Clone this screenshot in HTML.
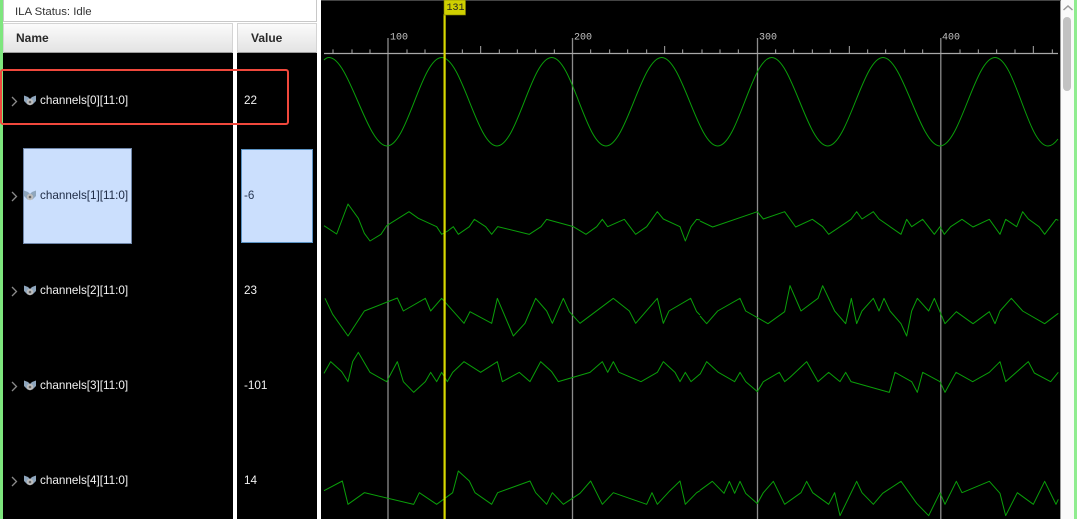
<!DOCTYPE html>
<html><head><meta charset="utf-8"><style>
html,body{margin:0;padding:0;background:#fff}
#p{position:relative;width:1081px;height:519px;overflow:hidden;background:#fff;font-family:"Liberation Sans",Arial,sans-serif}
#p div{position:absolute;box-sizing:border-box}
.t{font-size:11.7px;line-height:14px;white-space:nowrap;color:#f2f2f2}
.h{font-size:12px;font-weight:bold;color:#2a2a2a;line-height:14px;white-space:nowrap;top:31px}
.hd{top:23px;height:31px;background:linear-gradient(#fbfbfb,#e3e3e3);border:1px solid #d4d4d4;border-bottom:2px solid #9c9c9c}
</style></head><body><div id="p">
<div style="left:0;top:0;width:3px;height:519px;background:#7ee67e"></div>
<div style="left:3px;top:0;width:314px;height:22px;background:#fff;border:1px solid #c8c8c8;border-top:0"></div>
<div class="t" style="left:15px;top:5px;color:#333;font-size:11.4px">ILA Status: Idle</div>
<div class="hd" style="left:3px;width:230px"></div>
<div class="hd" style="left:237px;width:80px"></div>
<div class="h" style="left:16px">Name</div>
<div class="h" style="left:251px">Value</div>
<div style="left:3px;top:53px;width:230px;height:466px;background:#000"></div>
<div style="left:237px;top:53px;width:80px;height:466px;background:#000"></div>
<div style="left:23px;top:148px;width:109px;height:96px;background:#cbdffd;border:1px solid #6f86a8"></div>
<div style="left:241px;top:149px;width:72px;height:94px;background:#cbdffd;border:1px solid #5b93c4"></div>

<svg width="1081" height="519" style="position:absolute;left:0;top:0" xmlns="http://www.w3.org/2000/svg">
<defs>
<g id="ic"><path d="M0 0.5L4 2L6 4L8 2L12 0.5V6L8.500 9.500H3.500L0 6Z" fill="#8fa6bd"/><circle cx="6" cy="7" r="3.200" fill="#bdbdbd"/><circle cx="6" cy="7" r="1.300" fill="#666"/></g>
<path id="ch" d="M12 -4L16.500 0.500L12 5" fill="none" stroke="#8a8a8a" stroke-width="1.300"/>
</defs>
<use href="#ch" x="0" y="101"/><use href="#ic" x="24" y="95"/>
<use href="#ch" x="0" y="196"/><use href="#ic" x="24" y="190"/>
<use href="#ch" x="0" y="291"/><use href="#ic" x="24" y="285"/>
<use href="#ch" x="0" y="386"/><use href="#ic" x="24" y="380"/>
<use href="#ch" x="0" y="481"/><use href="#ic" x="24" y="475"/>
</svg>

<div class="t" style="left:40px;top:94px">channels[0][11:0]</div>
<div class="t" style="left:40px;top:189px;color:#1d2a44">channels[1][11:0]</div>
<div class="t" style="left:40px;top:284px">channels[2][11:0]</div>
<div class="t" style="left:40px;top:379px">channels[3][11:0]</div>
<div class="t" style="left:40px;top:474px">channels[4][11:0]</div>
<div class="t" style="left:244px;top:94px">22</div>
<div class="t" style="left:244px;top:189px;color:#2a3a55">-6</div>
<div class="t" style="left:244px;top:284px">23</div>
<div class="t" style="left:244px;top:379px">-101</div>
<div class="t" style="left:244px;top:474px">14</div>

<div style="left:321px;top:0;width:740px;height:519px;background:#000;border-top:1px solid #444;border-right:1px solid #999"></div>
<svg width="1081" height="519" style="position:absolute;left:0;top:0" xmlns="http://www.w3.org/2000/svg">
<g stroke="#8c8c8c" stroke-width="1.300" fill="none">
<path d="M388 38V519M572.500 38V519M757.500 38V519M940.800 38V519"/>
</g>
<path d="M324 53.500H1058" stroke="#a8a8a8" stroke-width="1.300"/>
<g transform="translate(320,0) scale(.33333)" stroke="#a8a8a8" stroke-width="3" fill="none">
<path d="M39 148V160M96 148V160M150 148V160M261 148V160M315 148V160M372 148V160M427 148V160M482 138V160M538 148V160M592 148V160M647 148V160M703 148V160M812 148V160M869 148V160M923 148V160M980 148V160M1034 138V160M1088 148V160"/>
</g>
<g transform="translate(700,0) scale(.33333)" stroke="#a8a8a8" stroke-width="3" fill="none">
<path d="M6 148V160M60 148V160M115 148V160M227 148V160M281 148V160M337 148V160M391 148V160M448 138V160M503 148V160M557 148V160M614 148V160M668 148V160M780 148V160M835 148V160M890 148V160M945 148V160M1000 138V160M1057 148V160"/>
</g>
<g font-family="'Liberation Mono',monospace" font-size="10" fill="#c4c4c4">
<text x="390" y="39.500">100</text><text x="574" y="39.500">200</text><text x="759" y="39.500">300</text><text x="942" y="39.500">400</text>
</g>
<g fill="none" stroke="#0a9f0a" stroke-width="1" stroke-linejoin="round">
<path d="M324 60C326 58 327 57.500 329 57.500C349 57.500 367 146 387 146C407 146 421.500 57.500 441.700 57.500C461.900 57.500 477 146 497 146C517 146 531.500 57.500 551.700 57.500C571.900 57.500 586 146 606 146C626 146 641.500 57.500 661.700 57.500C681.900 57.500 697.700 146 717.700 146C737.700 146 751.700 57.500 771.700 57.500C791.700 57.500 807.700 146 827.700 146C847.700 146 863 57.500 883 57.500C903 57.500 920 146 940 146C960 146 975 57.500 995 57.500C1015 57.500 1028 146 1048 146C1052 146 1055 143 1058 139"/>
</g>
<g transform="translate(320,190) scale(.33333)" fill="none" stroke="#0a9f0a" stroke-width="3" stroke-linejoin="round">
<polyline points="12,107 50,132 84,42 115,85 133,130 150,153 183,133 200,107 267,65 295,85 350,110 365,133 383,123 400,110 415,133 448,110 463,88 497,110 515,133 533,110 628,133 663,110 680,88 760,110 798,133 830,110 847,88 863,110 913,88 947,133 980,110 1012,65 1030,87 1080,110 1096,153 1113,110 1130,88 1140,90"/>
<polyline points="15,325 38,373 84,438 133,363 232,324 250,363 316,325 332,363 365,325 432,400 450,365 515,400 532,325 580,438 615,400 647,325 680,363 697,400 730,325 748,365 780,400 880,325 928,363 947,400 1012,325 1030,400 1047,363 1112,325 1130,365 1140,375"/>
</g>
<g transform="translate(700,190) scale(.33333)" fill="none" stroke="#0a9f0a" stroke-width="3" stroke-linejoin="round">
<polyline points="0,93 38,111 172,65 190,87 254,65 287,111 337,88 368,110 386,133 453,88 470,65 486,87 520,65 537,87 603,133 620,88 635,110 668,88 703,133 720,110 733,133 752,110 786,88 819,111 868,88 900,133 917,88 950,110 968,65 985,87 1017,110 1034,133 1068,88 1075,91"/>
<polyline points="0,378 20,401 53,363 120,325 137,363 204,401 254,365 270,287 303,363 354,325 368,287 404,363 437,401 454,325 470,401 486,363 520,325 537,363 552,325 570,363 603,401 620,438 635,363 652,325 686,363 703,325 735,401 769,365 819,401 868,365 885,401 900,363 934,325 968,363 1034,401 1075,370"/>
</g>
<g transform="translate(320,345) scale(.33333)" fill="none" stroke="#0a9f0a" stroke-width="3" stroke-linejoin="round">
<polyline points="12,85 32,50 65,80 84,110 98,50 115,22 150,82 200,110 232,50 250,110 281,142 316,110 332,82 350,110 365,82 382,110 398,82 432,50 482,82 532,50 547,110 598,82 630,110 662,50 695,80 715,110 810,82 847,50 863,82 880,50 897,82 963,110 1012,82 1030,50 1065,82 1080,110 1096,82 1113,110 1140,87"/>
<polyline points="12,437 67,408 84,478 133,443 281,478 298,443 350,478 398,443 415,378 448,408 465,443 515,478 533,443 630,408 647,443 680,478 697,443 730,478 780,445 812,408 847,478 880,443 980,478 996,443 1012,478 1047,440 1080,408 1096,478 1130,443 1140,437"/>
</g>
<g transform="translate(700,345) scale(.33333)" fill="none" stroke="#0a9f0a" stroke-width="3" stroke-linejoin="round">
<polyline points="0,88 20,50 55,82 104,110 120,82 137,110 172,140 190,110 238,82 254,110 270,97 320,50 354,110 386,82 420,110 437,82 453,110 568,142 585,82 635,110 652,142 668,82 720,110 735,142 768,82 818,110 868,82 900,50 917,110 985,50 1003,84 1052,110 1075,82"/>
<polyline points="0,436 37,409 72,445 88,409 104,445 120,409 137,445 172,476 190,443 220,409 254,478 303,443 320,409 338,443 386,478 404,443 420,512 470,409 486,443 520,478 548,445 603,409 650,475 686,512 720,443 735,478 769,409 786,443 868,409 900,445 917,512 952,443 1000,478 1034,409 1068,478 1075,463"/>
</g>
<rect x="443.500" y="14" width="2.200" height="505" fill="#d9d900"/>
<rect x="444" y="0" width="21.500" height="15" fill="#cfcf00" stroke="#808000" stroke-width=".6"/>
<text x="446.500" y="10" font-family="'Liberation Mono',monospace" font-size="10" fill="#222">131</text>
</svg>

<div style="left:1061px;top:0;width:13px;height:519px;background:#fafafa"></div>
<div style="left:1063px;top:17px;width:8px;height:74px;background:#c2c2c2;border-radius:4px"></div>
<svg width="12" height="8" style="position:absolute;left:1062px;top:4px" xmlns="http://www.w3.org/2000/svg"><path d="M1.500 6L6 2L10.500 6" fill="none" stroke="#9a9a9a" stroke-width="1.500"/></svg>
<div style="left:1074px;top:0;width:3px;height:519px;background:#8fec8f"></div>

<div style="left:0;top:69px;width:289px;height:56px;border:2.500px solid #f0483c;border-radius:3px"></div>
</div></body></html>
